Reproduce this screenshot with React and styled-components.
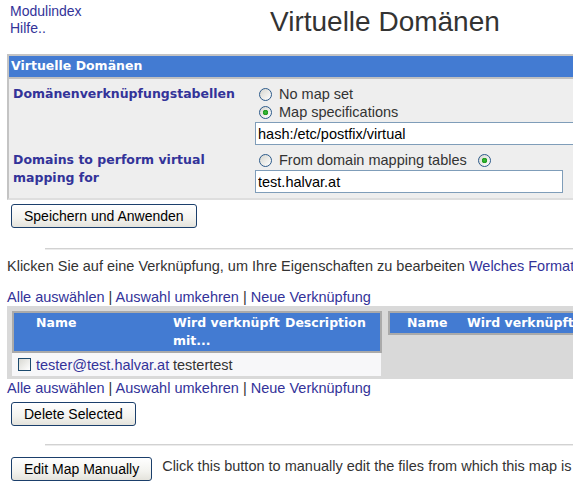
import React from "react";
import styled, { createGlobalStyle } from "styled-components";

const Global = createGlobalStyle`
  html, body { margin: 0; padding: 0; overflow: hidden; background: #fff; }
  body { font-family: "Liberation Sans", Arial, sans-serif; font-size: 14.5px; color: #333; }
`;

const Page = styled.div`
  width: 800px;
  padding-left: 7px;
`;

const TopBar = styled.div`
  display: flex;
  box-sizing: border-box;
  height: 54px;
  padding-top: 3px;
`;

const TopLinks = styled.div`
  width: 260px;
  padding-left: 3px;
  display: flex;
  flex-direction: column;
  align-items: flex-start;
  font-size: 14px;
  line-height: 17px;
`;

const Link = styled.a`
  color: #333399;
  text-decoration: none;
  cursor: pointer;
`;

const Title = styled.h1`
  margin: 3px 0 0;
  font-size: 28px;
  line-height: 32px;
  font-weight: normal;
  color: #333;
  white-space: nowrap;
`;

const FormTable = styled.div`
  width: 640px;
  border: 2px solid;
  border-color: #c4c4c4 #dedede #dedede #c4c4c4;
`;

const FormHeader = styled.div`
  background: #437bd2;
  color: #fff;
  font-family: "DejaVu Sans", Verdana, sans-serif;
  font-weight: bold;
  font-size: 12.5px;
  line-height: 18px;
  padding: 1px 2px 2px;
  border-bottom: 2px solid #c0c0c0;
`;

const FormBody = styled.div`
  background: #eeeeee;
  padding: 3px 0 2px;
  display: grid;
  grid-template-columns: 246px 1fr;
`;

const Label = styled.div`
  padding: 3px 4px;
  color: #333399;
  font-family: "DejaVu Sans", Verdana, sans-serif;
  font-weight: bold;
  font-size: 12.5px;
  line-height: 18px;
`;

const Value = styled.div`
  padding: 3px 0;
`;

const RadioLine = styled.div`
  display: flex;
  align-items: center;
  height: 18px;
  color: #333;
  white-space: nowrap;
`;

const Radio = styled.span`
  display: inline-block;
  box-sizing: border-box;
  flex: none;
  width: 13px;
  height: 13px;
  border-radius: 50%;
  border: 1px solid #2c5a8a;
  margin: 0 7px 0 ${(p) => p.$gap || 4}px;
  background: ${(p) =>
    p.$checked
      ? "radial-gradient(circle, #3cbf3c 0, #1e9a1e 2.5px, transparent 3px), linear-gradient(135deg, #d6d6cf, #ffffff)"
      : "linear-gradient(135deg, #d6d6cf, #ffffff)"};
`;

const TextInput = styled.input`
  display: block;
  box-sizing: border-box;
  margin-top: 1px;
  height: 23px;
  width: ${(p) => p.$w}px;
  border: 1px solid #7f9db9;
  padding: 0 2px;
  font-family: "Liberation Sans", Arial, sans-serif;
  font-size: 14.5px;
  color: #000;
  background: #fff;
  outline: none;
`;

const Button = styled.button`
  display: block;
  box-sizing: border-box;
  height: 24px;
  padding: 0 12px;
  margin: ${(p) => p.$mt || 0}px 0 0 4px;
  border: 1px solid #1b3f6b;
  border-radius: 3px;
  background: linear-gradient(#ffffff, #f3f3ef 60%, #e4e3dc);
  font-family: "Liberation Sans", Arial, sans-serif;
  font-size: 14px;
  color: #000;
  white-space: nowrap;
  flex: none;
`;

const Rule = styled.div`
  margin: ${(p) => p.$mt}px 0 0 38px;
  border-top: 1px solid #d2d2d2;
  border-bottom: 1px solid #ececec;
`;

const Para = styled.div`
  margin-top: ${(p) => p.$mt}px;
  line-height: 17px;
  white-space: nowrap;
  color: #333;
`;

const Sep = styled.span`
  color: #333;
`;

const GrayArea = styled.div`
  background: #d9d9d9;
  padding: 5px 0 3px 5px;
  display: flex;
  gap: 6px;
  align-items: flex-start;
`;

const ListTable = styled.div`
  width: ${(p) => p.$w}px;
  flex: none;
`;

const HeadRow = styled.div`
  display: grid;
  grid-template-columns: ${(p) => p.$cols};
  border: 2px solid #aaaaaa;
  background: #437bd2;
  color: #fff;
  font-family: "DejaVu Sans", Verdana, sans-serif;
  font-weight: bold;
  font-size: 12.5px;
  line-height: 18px;
  padding: 1px 0;
`;

const DataRow = styled.div`
  display: grid;
  grid-template-columns: 24px 137px 112px 1fr;
  align-items: center;
  height: 23px;
  background: #f7f7f9;
  margin-right: 1px;
  white-space: nowrap;
`;

const Check = styled.span`
  display: block;
  box-sizing: border-box;
  width: 13px;
  height: 13px;
  margin-left: 6px;
  border: 1px solid #1c4a6e;
  background: linear-gradient(135deg, #d8d8d2, #ffffff);
`;

const Cell = styled.span`
  overflow: visible;
`;

const EditRow = styled.div`
  display: flex;
  align-items: flex-start;
  gap: 10px;
  margin-top: 11px;
`;

const EditText = styled.div`
  padding-top: 1px;
  line-height: 17px;
  white-space: nowrap;
  color: #333;
`;

function SelectLinks({ mt }) {
  return (
    <Para $mt={mt}>
      <Link>Alle auswählen</Link> <Sep>|</Sep> <Link>Auswahl umkehren</Link>{" "}
      <Sep>|</Sep> <Link>Neue Verknüpfung</Link>
    </Para>
  );
}

export default function App() {
  return (
    <Page>
      <Global />
      <TopBar>
        <TopLinks>
          <Link>Modulindex</Link>
          <Link>Hilfe..</Link>
        </TopLinks>
        <Title>Virtuelle Domänen</Title>
      </TopBar>

      <FormTable>
        <FormHeader>Virtuelle Domänen</FormHeader>
        <FormBody>
          <Label>Domänenverknüpfungstabellen</Label>
          <Value>
            <RadioLine>
              <Radio />
              No map set
            </RadioLine>
            <RadioLine>
              <Radio $checked />
              Map specifications
            </RadioLine>
            <TextInput $w={400} defaultValue="hash:/etc/postfix/virtual" />
          </Value>
          <Label>Domains to perform virtual mapping for</Label>
          <Value>
            <RadioLine>
              <Radio />
              From domain mapping tables
              <Radio $checked $gap={11} />
            </RadioLine>
            <TextInput $w={308} defaultValue="test.halvar.at" />
          </Value>
        </FormBody>
      </FormTable>

      <Button $mt={4}>Speichern und Anwenden</Button>

      <Rule $mt={20} />

      <Para $mt={8}>
        Klicken Sie auf eine Verknüpfung, um Ihre Eigenschaften zu bearbeiten{" "}
        <Link>Welches Format?</Link>
      </Para>

      <SelectLinks mt={14} />

      <GrayArea>
        <ListTable $w={370}>
          <HeadRow $cols="22px 137px 112px 1fr">
            <Cell />
            <Cell>Name</Cell>
            <Cell>Wird verknüpft mit...</Cell>
            <Cell>Description</Cell>
          </HeadRow>
          <DataRow>
            <Check />
            <Cell>
              <Link>tester@test.halvar.at</Link>
            </Cell>
            <Cell>testertest</Cell>
            <Cell />
          </DataRow>
        </ListTable>
        <ListTable $w={340}>
          <HeadRow $cols="17px 60px 1fr">
            <Cell />
            <Cell>Name</Cell>
            <Cell>Wird verknüpft mit...</Cell>
          </HeadRow>
        </ListTable>
      </GrayArea>

      <SelectLinks mt={1} />

      <Button $mt={5}>Delete Selected</Button>

      <Rule $mt={18} />

      <EditRow>
        <Button>Edit Map Manually</Button>
        <EditText>
          Click this button to manually edit the files from which this map is built.
        </EditText>
      </EditRow>
    </Page>
  );
}
